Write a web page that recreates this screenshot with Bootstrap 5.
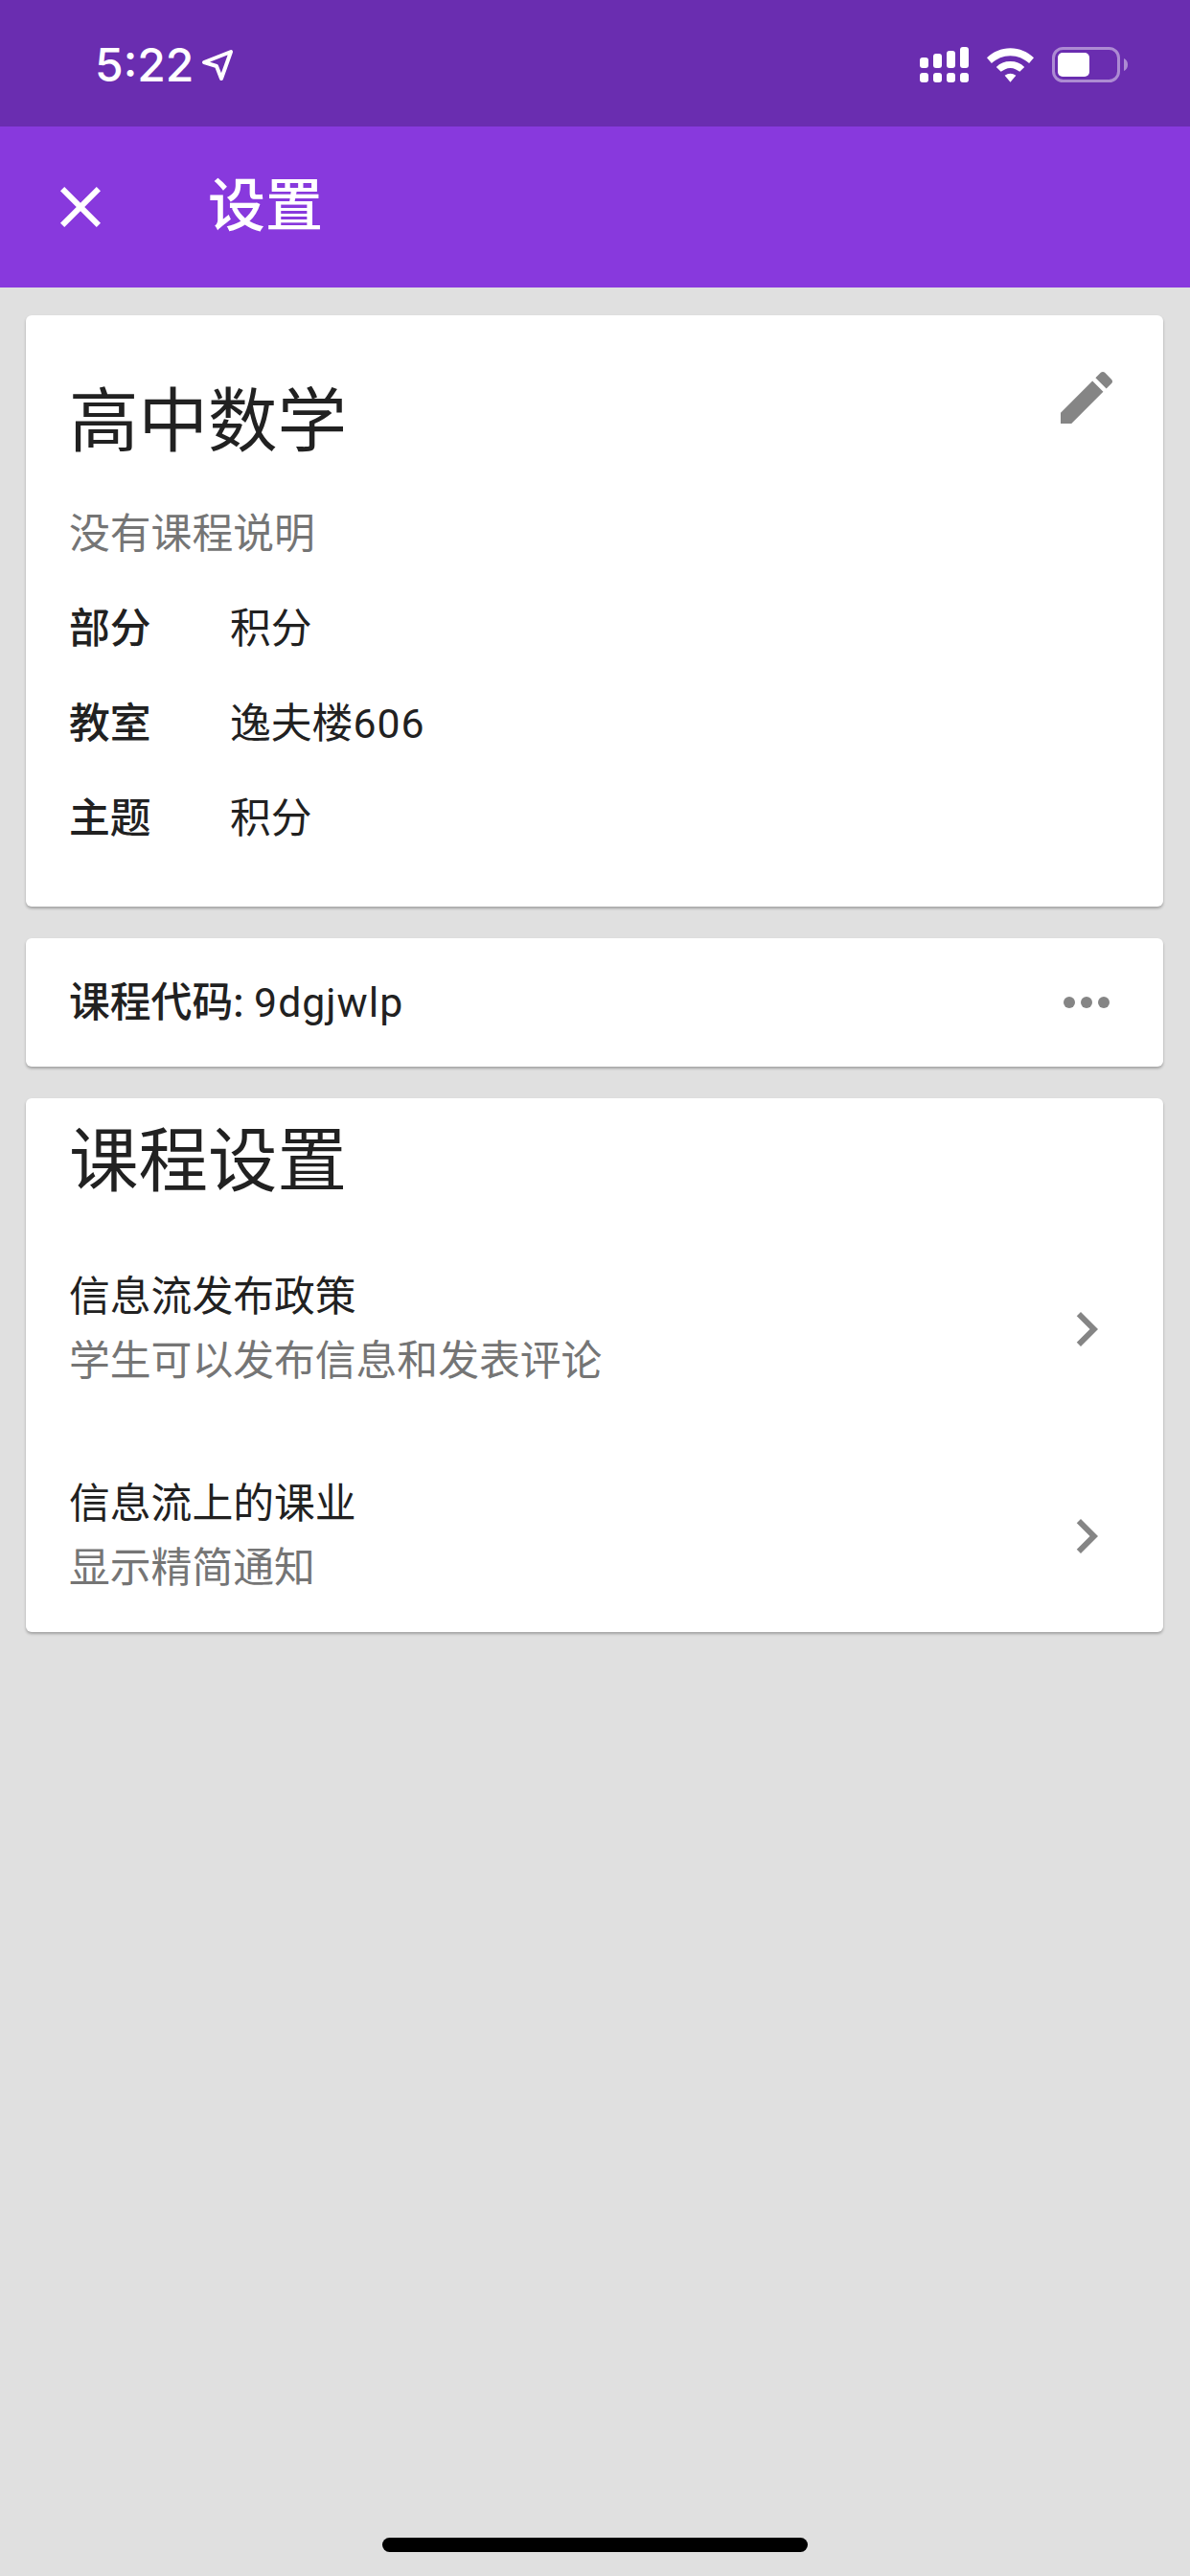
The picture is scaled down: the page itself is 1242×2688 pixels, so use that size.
<!DOCTYPE html>
<html lang="zh-CN">
<head>
  <meta charset="UTF-8" />
  <title>设置</title>
  <meta name="viewport" content="width=device-width, initial-scale=1" />
  <link href="https://cdn.jsdelivr.net/npm/bootstrap@5.3.0/dist/css/bootstrap.min.css" rel="stylesheet" />
  <style>
    body {
      background-color: #e0e0e0;
      color: #212121;
      font-family: Roboto, "Noto Sans CJK SC", sans-serif;
    }
    .page-wrap {
      height: 2688px;
    }
    .status-strip {
      height: 132px;
      background-color: #6a2db0;
      color: #fff;
      padding: 3px 65px 0 99px;
    }
    .status-time {
      font-family: Inter, sans-serif;
      font-size: 48px;
      font-weight: 500;
      line-height: 48px;
    }
    .status-gap {
      margin-left: 19px;
    }
    .app-strip {
      height: 168px;
      background-color: #8839dd;
      color: #fff;
      padding-left: 48px;
    }
    .app-title {
      font-size: 60px;
      font-weight: 500;
      line-height: 72px;
      margin-left: 97px;
    }
    .sheet-list {
      padding: 29px 28px 0 27px;
      gap: 33px;
    }
    .sheet {
      border: 0;
      border-radius: 6px;
      box-shadow: 0 2px 3px rgba(0,0,0,.28);
      padding-left: 45px;
      padding-right: 44px;
    }
    .sheet-course {
      height: 617px;
      padding-top: 50px;
    }
    .sheet-code {
      height: 134px;
    }
    .sheet-settings {
      height: 557px;
    }
    .big-head {
      font-size: 72.500px;
      font-weight: 400;
      line-height: 72px;
      margin: 0;
    }
    .course-head {
      margin-top: 26px;
    }
    .settings-head {
      margin-top: 31px;
    }
    .body-line {
      font-size: 42.800px;
      line-height: 58px;
    }
    .muted-line {
      color: #757575;
    }
    .course-desc {
      margin-top: 51px;
    }
    .info-rows {
      margin-top: 41px;
      gap: 41px;
    }
    .info-key {
      width: 168px;
      font-weight: 500;
    }
    .strong-line {
      font-weight: 500;
    }
    .latin-run {
      letter-spacing: 1px;
    }
    .ic {
      width: 72px;
      height: 72px;
      flex-shrink: 0;
      fill: currentColor;
    }
    .ic-grey {
      color: #858585;
    }
    .option-list {
      margin-top: 71px;
      gap: 82px;
    }
    .option-text {
      line-height: 67px;
    }
    .home-bar {
      width: 444px;
      height: 15px;
      border-radius: 8px;
      background-color: #000;
      margin-bottom: 25px;
    }
  </style>
</head>
<body>

<div class="page-wrap d-flex flex-column">

  <div class="status-strip d-flex align-items-center justify-content-between flex-shrink-0">
    <div class="d-flex align-items-center gap-2">
      <span class="status-time">5:22</span>
      <svg width="34" height="34" viewBox="0 0 34 34" fill="none" stroke="#fff" stroke-width="4" stroke-linejoin="round"><path d="M3 14 31 3 21 31 16 18z"/></svg>
    </div>
    <div class="d-flex align-items-center">
      <svg width="51" height="38" viewBox="0 0 51 38" fill="#fff">
        <rect x="0" y="11" width="9" height="11" rx="3"/>
        <rect x="14" y="7" width="9" height="15" rx="3"/>
        <rect x="28" y="4" width="9" height="18" rx="3"/>
        <rect x="42" y="0" width="9" height="22" rx="3"/>
        <rect x="0" y="27" width="9" height="10" rx="3"/>
        <rect x="14" y="27" width="9" height="10" rx="3"/>
        <rect x="28" y="27" width="9" height="10" rx="3"/>
        <rect x="42" y="27" width="9" height="10" rx="3"/>
      </svg>
      <svg class="status-gap" width="49" height="36" viewBox="0 0 50 36" fill="#fff">
        <path d="M25 0c10 0 18 4 25 10l-5 6C39 11 33 8 25 8S11 11 5 16L0 10C7 4 15 0 25 0z"/>
        <path d="M25 14c6 0 11 2 15 6l-5 5c-3-2-6-4-10-4s-7 2-10 4l-5-5c4-4 9-6 15-6z"/>
        <path d="M25 27c2 0 4 1 6 2l-6 7-6-7c2-1 4-2 6-2z"/>
      </svg>
      <svg class="status-gap" width="79" height="37" viewBox="0 0 79 37" fill="#fff">
        <rect x="1.500" y="1.500" width="68" height="34" rx="10" fill="none" stroke="#fff" stroke-opacity=".45" stroke-width="3"/>
        <rect x="6" y="6" width="33" height="25" rx="5"/>
        <path d="M75 12c2.500 1 4 3.500 4 6.500s-1.500 5.500-4 6.500z" fill-opacity=".45"/>
      </svg>
    </div>
  </div>

  <div class="app-strip d-flex align-items-center flex-shrink-0">
    <svg class="ic" viewBox="0 0 24 24"><path d="M19 6.410 17.590 5 12 10.590 6.410 5 5 6.410 10.590 12 5 17.590 6.410 19 12 13.410 17.590 19 19 17.590 13.410 12z"/></svg>
    <div class="app-title">设置</div>
  </div>

  <div class="sheet-list d-flex flex-column">

    <div class="card sheet sheet-course">
      <div class="d-flex justify-content-between align-items-start">
        <h1 class="big-head course-head">高中数学</h1>
        <svg class="ic ic-grey" viewBox="0 0 24 24"><path d="M3 17.250V21h3.750L17.810 9.940l-3.750-3.750L3 17.250zM20.710 7.040c.39-.39.39-1.020 0-1.410l-2.340-2.340c-.39-.39-1.020-.39-1.410 0l-1.830 1.830 3.750 3.750 1.830-1.830z"/></svg>
      </div>
      <div class="body-line muted-line course-desc">没有课程说明</div>
      <div class="info-rows d-flex flex-column">
        <div class="d-flex body-line"><span class="info-key">部分</span><span>积分</span></div>
        <div class="d-flex body-line"><span class="info-key">教室</span><span>逸夫楼<span class="latin-run">606</span></span></div>
        <div class="d-flex body-line"><span class="info-key">主题</span><span>积分</span></div>
      </div>
    </div>

    <div class="card sheet sheet-code d-flex flex-row align-items-center justify-content-between">
      <div class="body-line"><span class="strong-line">课程代码:</span> <span class="latin-run">9dgjwlp</span></div>
      <svg class="ic ic-grey" viewBox="0 0 24 24"><circle cx="6" cy="12" r="2"/><circle cx="12" cy="12" r="2"/><circle cx="18" cy="12" r="2"/></svg>
    </div>

    <div class="card sheet sheet-settings">
      <h2 class="big-head settings-head">课程设置</h2>
      <div class="option-list d-flex flex-column">
        <div class="d-flex align-items-center justify-content-between">
          <div class="body-line option-text">
            <div>信息流发布政策</div>
            <div class="muted-line">学生可以发布信息和发表评论</div>
          </div>
          <svg class="ic ic-grey" viewBox="0 0 24 24"><path d="M10 6 8.590 7.410 13.170 12l-4.580 4.590L10 18l6-6z"/></svg>
        </div>
        <div class="d-flex align-items-center justify-content-between">
          <div class="body-line option-text">
            <div>信息流上的课业</div>
            <div class="muted-line">显示精简通知</div>
          </div>
          <svg class="ic ic-grey" viewBox="0 0 24 24"><path d="M10 6 8.590 7.410 13.170 12l-4.580 4.590L10 18l6-6z"/></svg>
        </div>
      </div>
    </div>

  </div>

  <div class="home-bar mt-auto mx-auto"></div>
</div>

<script src="https://cdn.jsdelivr.net/npm/bootstrap@5.3.0/dist/js/bootstrap.bundle.min.js"></script>
</body>
</html>
